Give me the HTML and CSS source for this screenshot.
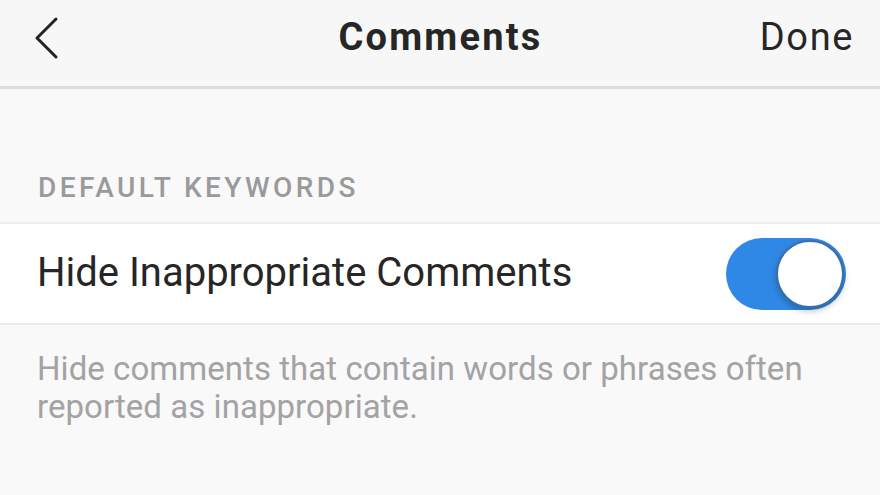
FILE: index.html
```html
<!DOCTYPE html>
<html lang="en">

<head>
    <meta charset="UTF-8">
    <meta name="viewport" content="width=device-width, initial-scale=1.0">
    <title>Comments</title>
    <link rel="stylesheet" href="styles.css">
</head>

<body>
    <div class="header">
        <div class="back">
            <svg width="26" height="44" viewBox="0 0 26 44">
                <path d="M23 3 L4 22 L23 41" fill="none" stroke="#222" stroke-width="3" stroke-linecap="round" stroke-linejoin="round" />
            </svg>
        </div>
        <p class="title">Comments</p>
        <p class="done">Done</p>
    </div>

    <p class="section">DEFAULT KEYWORDS</p>
    <div class="row">
        <span class="label">Hide Inappropriate Comments</span>
        <div class="toggle">
            <div class="knob"></div>
        </div>
    </div>
    <p class="note">Hide comments that contain words or phrases often reported as inappropriate.</p>
</body>

</html>
```
FILE: styles.css
```css
* {
    padding: 0px;
    margin: 0px;
    box-sizing: border-box;
}

body {
    background-color: #f9f9f9;
    font-family: Roboto, "Liberation Sans", sans-serif;
    width: 880px;
    height: 495px;
    overflow: hidden;
}

.header {
    height: 89px;
    background-color: #f7f7f7;
    border-bottom: 3px solid #dcdcdc;
    display: flex;
    align-items: center;
    justify-content: space-between;
    padding: 0px 26px 0px 33px;
}

.back {
    width: 120px;
    display: flex;
    padding-bottom: 10px;
}

.title {
    font-size: 38px;
    font-weight: bold;
    color: #262626;
    padding-bottom: 12px;
    padding-right: 6px;
    letter-spacing: 2.2px;
}

.done {
    width: 120px;
    text-align: right;
    font-size: 38px;
    color: #262626;
    padding-bottom: 12px;
    letter-spacing: 1.6px;
}

.section {
    margin-top: 82px;
    padding-left: 38px;
    font-size: 28px;
    font-weight: 500;
    color: #9a9a9a;
    letter-spacing: 3.4px;
    height: 51px;
}

.row {
    background-color: #ffffff;
    border-top: 2px solid #ececec;
    border-bottom: 2px solid #ececec;
    height: 103px;
    display: flex;
    align-items: center;
    justify-content: space-between;
    padding: 0px 34px 0px 37px;
}

.label {
    font-size: 40px;
    color: #262626;
    padding-bottom: 2px;
}

.toggle {
    width: 120px;
    height: 72px;
    border-radius: 36px;
    background-color: #3088e6;
    display: flex;
    justify-content: flex-end;
    align-items: center;
    padding-right: 2px;
}

.knob {
    width: 68px;
    height: 68px;
    border-radius: 50%;
    background-color: #ffffff;
    border: 2px solid #3a6fa8;
    box-shadow: 0px 3px 6px rgba(0, 0, 0, 0.25);
}

.note {
    padding: 25px 30px 0px 37px;
    font-size: 33px;
    line-height: 38px;
    color: #a3a3a3;
    letter-spacing: 0.05px;
}
```
